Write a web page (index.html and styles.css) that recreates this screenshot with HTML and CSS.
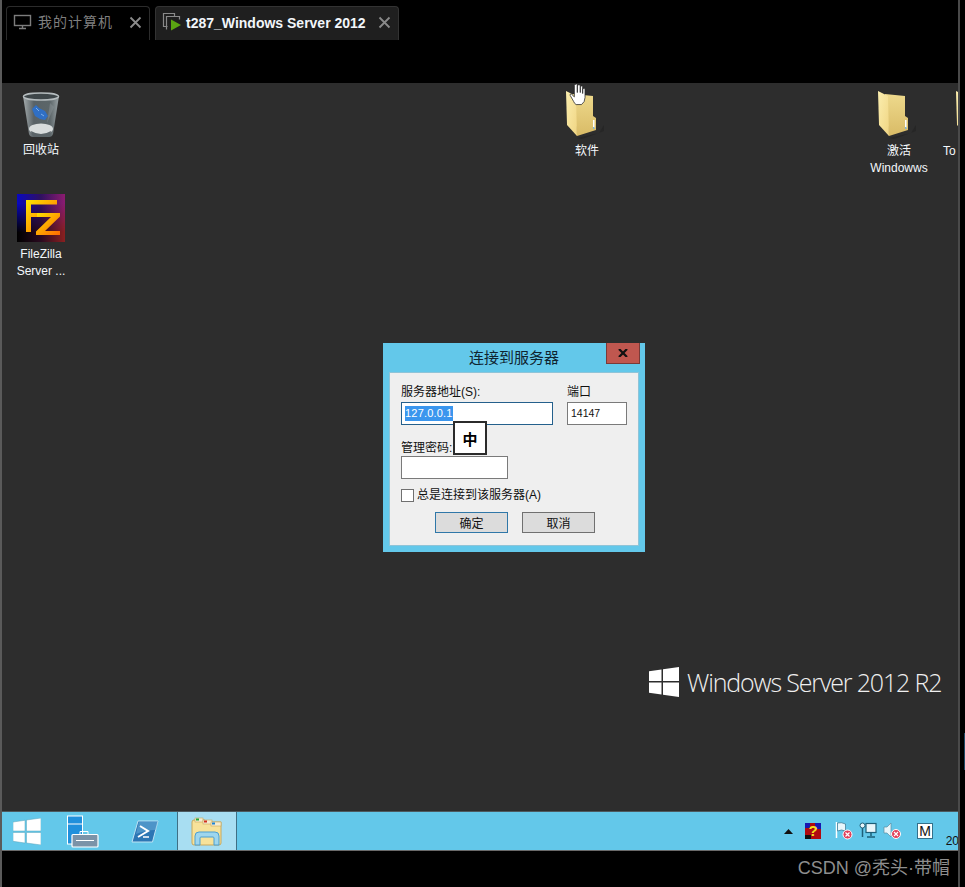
FILE: index.html
```html
<!DOCTYPE html>
<html lang="zh-CN">
<head>
<meta charset="utf-8">
<title>VMware</title>
<link rel="stylesheet" href="styles.css">
</head>
<body>
<div class="app">
  <svg class="defs" width="0" height="0">
    <defs>
      <linearGradient id="fl" x1="0" y1="0" x2="1" y2="1"><stop offset="0" stop-color="#fbeeaf"/><stop offset="1" stop-color="#f0d583"/></linearGradient>
      <linearGradient id="fr" x1="0" y1="0" x2="0" y2="1"><stop offset="0" stop-color="#eed98c"/><stop offset="1" stop-color="#d9bb66"/></linearGradient>
      <g id="folderShape">
        <path d="M12 47l22-5 5-8v6l-22 8z" fill="#262626"/>
        <path d="M8 3l20 2v20l3 2v12L12 45z" fill="url(#fr)"/>
        <path d="M1 0l10 5 1 40L2 34z" fill="url(#fl)"/>
        <rect x="28" y="29" width="1.500" height="8" fill="#fff"/>
        <rect x="28" y="36" width="1.500" height="2" fill="#7fb6d8"/>
      </g>
    </defs>
  </svg>
  <header class="tabbar">
    <div class="tab">
      <svg class="tab-ico" width="20" height="18" viewBox="0 0 20 18"><rect x="1.500" y="2.500" width="16" height="10" fill="none" stroke="#7d7d7d" stroke-width="1.400"/><path d="M9.500 13v2M6 15.500h7" stroke="#7d7d7d" stroke-width="1.400"/></svg>
      <span class="tab-label">我的计算机</span>
      <span class="tab-x"><svg width="13" height="13" viewBox="0 0 13 13"><path d="M1.500 1.500l10 10M11.500 1.500l-10 10" stroke="#8a8a8a" stroke-width="1.800"/></svg></span>
    </div>
    <div class="tab tab-active">
      <svg class="tab-ico" width="20" height="20" viewBox="0 0 20 20"><path d="M5.500 14.500h-4v-13h11v3" fill="none" stroke="#8a8a8a" stroke-width="1.200"/><path d="M4.500 17.500v-13h13v3" fill="none" stroke="#8a8a8a" stroke-width="1.200"/><path d="M9 7.500l10 5.500-10 5.500z" fill="#5aa512"/></svg>
      <span class="tab-label-active">t287_Windows Server 2012</span>
      <span class="tab-x"><svg width="13" height="13" viewBox="0 0 13 13"><path d="M1.500 1.500l10 10M11.500 1.500l-10 10" stroke="#8a8a8a" stroke-width="1.800"/></svg></span>
    </div>
  </header>

  <main class="screen">
    <section class="desktop">
      <div class="desk-item item-bin">
        <svg width="44" height="48" viewBox="0 0 44 48">
          <defs>
            <linearGradient id="binG" x1="0" x2="1" y1="0" y2="0"><stop offset="0" stop-color="#a5acae"/><stop offset=".3" stop-color="#596266"/><stop offset=".75" stop-color="#5c6669"/><stop offset="1" stop-color="#9aa2a5"/></linearGradient>
          </defs>
          <path d="M4 5L10 43q1 3 4 3h16q3 0 4-3L40 5z" fill="url(#binG)"/>
          <ellipse cx="22" cy="5.500" rx="17.500" ry="3.500" fill="#3e4649" stroke="#b5bcbe" stroke-width="1.500"/>
          <ellipse cx="22" cy="38" rx="12" ry="5.500" fill="#d8dcdc"/>
          <path d="M12 40q10 6 20 0l-1 4q-9 3-18 0z" fill="#5b6468"/>
          <path d="M13 18l4-4 3 3 6 3 3 5-3 4-5-1-5-3z" fill="#2f6fc4"/>
          <path d="M17 17l3 3M22 23l3 2" stroke="#7fb0ea" stroke-width="1"/>
          <path d="M31 12l-3 20 7-16z" fill="#8a9295" opacity=".5"/>
        </svg>
        <span class="desk-label">回收站</span>
      </div>

      <div class="desk-item item-fz">
        <svg width="48" height="48" viewBox="0 0 48 48">
          <defs>
            <linearGradient id="fzBg" x1="0" y1="0" x2="1" y2="0"><stop offset="0" stop-color="#0808c0"/><stop offset=".5" stop-color="#301060"/><stop offset="1" stop-color="#8c1c70"/></linearGradient>
            <linearGradient id="fzLow" x1="0" y1="0" x2="1" y2="0"><stop offset="0" stop-color="#000"/><stop offset=".5" stop-color="#2a0a20"/><stop offset="1" stop-color="#8a2020"/></linearGradient>
            <linearGradient id="fzV" x1="0" y1="0" x2="0" y2="1"><stop offset="0" stop-color="#fff" stop-opacity="0"/><stop offset=".2" stop-color="#fff" stop-opacity="0"/><stop offset=".8" stop-color="#fff"/></linearGradient>
            <mask id="fzM"><rect width="48" height="48" fill="url(#fzV)"/></mask>
            <linearGradient id="fzFg" x1="0" y1="0" x2="1" y2="1"><stop offset="0" stop-color="#fbe400"/><stop offset=".5" stop-color="#ffa400"/><stop offset="1" stop-color="#ff6a00"/></linearGradient>
          </defs>
          <rect width="48" height="48" fill="url(#fzBg)"/>
          <rect width="48" height="48" fill="url(#fzLow)" mask="url(#fzM)"/>
          <path d="M9 38V6h31v4.500H14V19h11v4H14v15z" fill="url(#fzFg)"/>
          <path d="M20 19h23v3.500L28 37h15v4H19v-3.500L34 23H20z" fill="url(#fzFg)"/>
        </svg>
        <span class="desk-label">FileZilla<br>Server ...</span>
      </div>

      <div class="desk-item item-soft">
        <svg class="folder" width="44" height="50" viewBox="0 0 44 50"><use href="#folderShape"/></svg>
        <span class="desk-label">软件</span>
      </div>

      <svg class="cursor" width="19" height="23" viewBox="0 0 16 24" preserveAspectRatio="none"><path d="M5 1.500q1.500-1 2 0V10V2.500q1.500-1.500 2.500 0V10V3.500q1.500-1 2 .5V11V6q1.500-1 2 .5V15q0 5-3 7.500H6q-1.500-1-2-3L1 13q-.5-2 1-1.500l2.500 3V2.500z" fill="#fff" stroke="#222" stroke-width=".7"/></svg>

      <div class="desk-item item-act">
        <svg class="folder" width="44" height="50" viewBox="0 0 44 50"><use href="#folderShape"/></svg>
        <span class="desk-label">激活<br>Windowws</span>
      </div>

      <div class="desk-item item-to">
        <svg class="folder" width="44" height="50" viewBox="0 0 44 50"><use href="#folderShape"/></svg>
        <span class="desk-label">To</span>
      </div>

      <div class="brand">
        <svg width="30" height="30" viewBox="0 0 30 30"><path d="M0 4.300L12.500 2.500V14H0zM14 2.300L30 0v14H14zM0 15.500h12.500v12L0 25.700zM14 15.500h16V30l-16-2.300z" fill="#fff"/></svg>
        <span class="brand-text">Windows Server 2012 R2</span>
      </div>

      <div class="dialog">
        <div class="dlg-title">
          <span class="dlg-title-text">连接到服务器</span>
          <button class="dlg-close"><svg width="10" height="8" viewBox="0 0 10 8"><path d="M1 0l8 8M9 0L1 8" stroke="#111" stroke-width="2.200"/></svg></button>
        </div>
        <div class="dlg-body">
          <div class="row-top">
            <div class="col-addr">
              <label class="lbl">服务器地址(S):</label>
              <div class="input input-focus"><span class="sel">127.0.0.1</span></div>
            </div>
            <div class="col-port">
              <label class="lbl">端口</label>
              <div class="input input-port">14147</div>
            </div>
          </div>
          <label class="lbl lbl-pass">管理密码:</label>
          <div class="input input-pass"></div>
          <div class="check-row"><span class="check"></span><span class="lbl">总是连接到该服务器(A)</span></div>
          <div class="btn-row">
            <button class="btn btn-default">确定</button>
            <button class="btn">取消</button>
          </div>
          <div class="ime">中</div>
        </div>
      </div>
    </section>

    <footer class="taskbar">
      <div class="tb-btn tb-start">
        <svg width="28" height="27" viewBox="0 0 28 27"><path d="M0 4L12 2.300V13H0zM13.500 2L28 0v13H13.500zM0 14.500h12V25L0 23.300zM13.500 14.500H28V27l-14.500-2z" fill="#fff" stroke="#5aa5bb" stroke-width=".5"/></svg>
      </div>
      <div class="tb-btn tb-server">
        <svg width="33" height="33" viewBox="0 0 33 33"><rect x="1.500" y="1" width="15" height="28" fill="#2090dc" stroke="#fff"/><path d="M1.500 9h15" stroke="#fff"/><path d="M14 19.500v-3h8v3" fill="none" stroke="#fff"/><rect x="6" y="19.500" width="26" height="12.500" rx="1" fill="#7b93a8" stroke="#fff" stroke-width="1.200"/><path d="M10 25.500h18" stroke="#fff"/></svg>
      </div>
      <div class="tb-btn tb-ps">
        <svg width="28" height="23" viewBox="0 0 28 23"><path d="M7 1h20l-5.500 21H1z" fill="#2c76b4" stroke="#bfe3f3"/><path d="M8 1h19l-2 9q-10 0-20 4z" fill="#6eb2dc" opacity=".5"/><path d="M9 6l8 5-10 6" fill="none" stroke="#fff" stroke-width="2"/><path d="M12 17h6" stroke="#fff" stroke-width="1.500"/></svg>
      </div>
      <div class="tb-btn tb-ex">
        <svg width="32" height="29" viewBox="0 0 32 29">
          <path d="M1 5q0-2 2-2h11l2 2h14v21q0 2-2 2H3q-2 0-2-2z" fill="#f7e29a" stroke="#c8a85c"/>
          <rect x="4" y="1" width="8" height="4" fill="#f5ecd0" stroke="#c8a85c" stroke-width=".6"/><rect x="5" y="1.500" width="3" height="2" fill="#21a838"/>
          <rect x="12" y="3" width="9" height="4" fill="#f5ecd0" stroke="#c8a85c" stroke-width=".6"/><rect x="13" y="3.500" width="3" height="2" fill="#d23020"/>
          <rect x="20" y="5" width="10" height="4" fill="#f5ecd0" stroke="#c8a85c" stroke-width=".6"/><rect x="21" y="5.500" width="3" height="2" fill="#1b84d8"/>
          <path d="M4 28v-9q0-4 4-4h16q4 0 4 4v9h-5v-7q0-1-1-1H10q-1 0-1 1v7z" fill="#9ed6ee" stroke="#4d9fd0"/>
        </svg>
      </div>
      <div class="tray">
        <svg class="tray-up" width="9" height="5" viewBox="0 0 9 5"><path d="M4.500 0L9 5H0z" fill="#111"/></svg>
        <svg class="tray-ico-q" width="16" height="16" viewBox="0 0 16 16"><rect width="16" height="16" fill="#b00a10"/><rect width="5" height="5" fill="#1818b0"/><rect x="10" width="6" height="6" fill="#1818b0"/><rect y="12" width="6" height="4" fill="#111"/><text x="8" y="13" text-anchor="middle" class="q">?</text></svg>
        <svg class="tray-ico" width="18" height="18" viewBox="0 0 18 18"><path d="M1.500 0v16" stroke="#fff" stroke-width="1.500"/><path d="M2.500 1q4-1 8 1v7q-4-2-8 0z" fill="#e8f6fb" stroke="#38738c" stroke-width=".7"/><circle cx="12.500" cy="12.500" r="4.500" fill="#e0405a" stroke="#fff"/><path d="M10.500 10.500l4 4M14.500 10.500l-4 4" stroke="#fff" stroke-width="1.200"/></svg>
        <svg class="tray-ico" width="18" height="18" viewBox="0 0 18 18"><circle cx="3.500" cy="3.500" r="2.500" fill="#e8f6fb" stroke="#1d5f78" stroke-width="1"/><path d="M3.500 6v9" stroke="#1d5f78" stroke-width="1.500"/><rect x="7" y="1.500" width="10" height="9" fill="#e8f6fb" stroke="#1d5f78" stroke-width="1.200"/><path d="M12 11v3M8 15h8" stroke="#1d5f78" stroke-width="1.500"/></svg>
        <svg class="tray-ico" width="18" height="18" viewBox="0 0 18 18"><path d="M1 5h3l4-4v14l-4-4H1z" fill="#e8f6fb" stroke="#5a8ca2" stroke-width=".7"/><circle cx="13" cy="12" r="4.500" fill="#e0405a" stroke="#fff"/><path d="M11 10l4 4M15 10l-4 4" stroke="#fff" stroke-width="1.200"/></svg>
        <span class="tray-m">M</span>
        <span class="tray-clock">20</span>
      </div>
    </footer>
  </main>
  <div class="watermark">CSDN @秃头·带帽</div>
</div>
</body>
</html>
```
FILE: styles.css
```css
* { box-sizing: border-box; }
html, body { margin: 0; padding: 0; }
body {
  width: 965px;
  height: 887px;
  background: #000;
  overflow: hidden;
  font-family: "Liberation Sans", "Noto Sans CJK SC", sans-serif;
}
.app {
  width: 965px;
  height: 887px;
  border-left: 2px solid #5a5a5a;
  display: flex;
  flex-direction: column;
  position: relative;
}
.app::after {
  content: "";
  position: absolute;
  left: 956px;
  top: 0;
  width: 2px;
  height: 887px;
  background: #4a4a4a;
}
.app::before {
  content: "";
  position: absolute;
  left: 962px;
  top: 733px;
  width: 1px;
  height: 37px;
  background: #1f4a66;
}
.defs { position: absolute; }
.tabbar {
  height: 83px;
  padding: 6px 0 0 4px;
  display: flex;
  align-items: flex-start;
  gap: 5px;
  flex: none;
}
.tab {
  height: 34px;
  border: 1px solid #2c2c2c;
  border-bottom: 0;
  border-radius: 4px 4px 0 0;
  display: flex;
  align-items: center;
  background: #000;
  width: 144px;
  padding: 0 0 2px 6px;
}
.tab-active {
  width: 244px;
  background: #1f1f1f;
  border-color: #333;
}
.tab-ico { flex: none; margin-bottom: 1px; }
.tab-label {
  margin-left: 5px;
  margin-bottom: 3px;
  font-size: 14px;
  color: #7f7f7f;
  letter-spacing: 1px;
  width: 85px;
  white-space: nowrap;
}
.tab-label-active {
  margin-left: 4px;
  font-size: 14px;
  font-weight: 700;
  color: #f2f6fa;
  white-space: nowrap;
  width: 180px;
}
.tab-x { display: flex; margin-left: auto; margin-right: 7px; }
.screen {
  width: 956px;
  flex: none;
  height: 768px;
  display: flex;
  flex-direction: column;
}
.desktop {
  flex: none;
  height: 728px;
  background: #2d2d2d;
  position: relative;
  overflow: hidden;
}
.desk-item {
  position: absolute;
  width: 76px;
  display: flex;
  flex-direction: column;
  align-items: center;
}
.desk-label {
  color: #f4f8fc;
  font-size: 12px;
  line-height: 17px;
  text-align: center;
  white-space: nowrap;
}
.item-bin { left: 1px; top: 8px; }
.item-bin .desk-label { margin-top: 3px; }
.item-fz { left: 1px; top: 111px; }
.item-fz .desk-label { margin-top: 4px; }
.item-soft { left: 547px; top: 8px; }
.item-soft .desk-label { margin-top: 2px; }
.item-act { left: 859px; top: 8px; }
.item-act .desk-label { margin-top: 2px; }
.item-to { left: 941px; top: 8px; align-items: flex-start; }
.item-to .folder { margin-left: 12px; }
.item-to .desk-label { margin-top: 2px; }
.cursor { position: absolute; left: 567px; top: 0; }
.brand {
  position: absolute;
  left: 647px;
  top: 582px;
  display: flex;
  align-items: center;
  gap: 8px;
  color: #f0f0f0;
}
.brand-text {
  font-family: "Open Sans", sans-serif;
  font-size: 25px;
  font-weight: 300;
  letter-spacing: -1.15px;
  white-space: nowrap;
}
.dialog {
  position: absolute;
  left: 381px;
  top: 260px;
  width: 262px;
  height: 209px;
  background: #63c8ea;
  display: flex;
  flex-direction: column;
  padding: 0 6px 6px;
}
.dlg-title {
  height: 29px;
  position: relative;
  text-align: center;
  flex: none;
}
.dlg-title-text {
  display: block;
  font-size: 15px;
  line-height: 29px;
  color: #0f2430;
}
.dlg-close {
  position: absolute;
  top: 0;
  right: -1px;
  width: 34px;
  height: 21px;
  padding: 0;
  background: #c0574f;
  border: 1px solid #7a3a38;
  border-top: 0;
  display: flex;
  align-items: center;
  justify-content: center;
}
.dlg-body {
  flex: 1;
  background: #efefef;
  border: 1px solid #8fc4d8;
  position: relative;
  padding: 11px 11px 0;
}
.lbl {
  display: block;
  font-size: 12px;
  line-height: 17px;
  color: #111;
  white-space: nowrap;
}
.row-top { display: flex; gap: 14px; }
.col-addr { width: 152px; }
.col-port { width: 60px; }
.input {
  background: #fff;
  border: 1px solid #7a7a7a;
  height: 23px;
  margin-top: 1px;
  font-size: 11px;
  line-height: 20px;
  color: #111;
}
.input-focus { border-color: #24608c; padding-left: 3px; }
.input-port { padding-left: 3px; font-size: 10.5px; }
.sel { background: #3a96ee; color: #fff; display: inline-block; line-height: 15px; letter-spacing: 0.2px; }
.lbl-pass { margin-top: 15px; }
.input-pass { width: 107px; margin-top: -1px; }
.check-row { display: flex; align-items: center; gap: 3px; margin-top: 8px; }
.check { width: 13px; height: 13px; background: #fff; border: 1px solid #707070; flex: none; }
.btn-row { display: flex; gap: 14px; margin-top: 8px; margin-left: 34px; }
.btn {
  width: 73px;
  height: 21px;
  background: #dcdcdc;
  border: 1px solid #707070;
  font-family: inherit;
  font-size: 12px;
  color: #111;
  padding: 0;
}
.btn-default { border-color: #2f77a8; }
.ime {
  position: absolute;
  left: 63px;
  top: 48px;
  width: 34px;
  height: 34px;
  background: #fff;
  border: 2px solid #2b2b2b;
  display: flex;
  align-items: center;
  justify-content: center;
  font-size: 15px;
  font-weight: 700;
  color: #000;
}
.taskbar {
  flex: none;
  height: 40px;
  background: #63c8ea;
  border-top: 1px solid #4d5a60;
  border-bottom: 1px solid #6a6a6a;
  display: flex;
  align-items: center;
}
.tb-btn { height: 100%; display: flex; align-items: center; justify-content: center; flex: none; }
.tb-start { width: 47px; padding-left: 3px; }
.tb-server { width: 66px; }
.tb-ps { width: 62px; padding-right: 2px; }
.tb-ex {
  width: 60px;
  background: #a8def2;
  border-left: 1px solid #3f6f84;
  border-right: 1px solid #3f6f84;
}
.tray {
  margin-left: auto;
  display: flex;
  align-items: center;
  height: 100%;
  position: relative;
  width: 177px;
}
.tray-up { margin-left: 3px; margin-right: 12px; }
.tray-ico-q { margin-right: 14px; }
.tray-ico { margin-right: 6px; }
.q { font-family: "Liberation Sans", sans-serif; font-size: 15px; font-weight: 700; fill: #f5e020; }
.tray-m {
  width: 16px;
  height: 16px;
  margin-left: 10px;
  background: #fff;
  border: 1px solid #34708a;
  font-size: 14px;
  line-height: 14px;
  text-align: center;
  color: #111;
}
.tray-clock {
  position: absolute;
  right: -1px;
  bottom: 2px;
  font-size: 12px;
  line-height: 14px;
  color: #111;
}
.watermark {
  position: absolute;
  right: 15px;
  top: 857px;
  font-size: 18px;
  line-height: 22px;
  color: #8e8e8e;
  white-space: nowrap;
}
```
